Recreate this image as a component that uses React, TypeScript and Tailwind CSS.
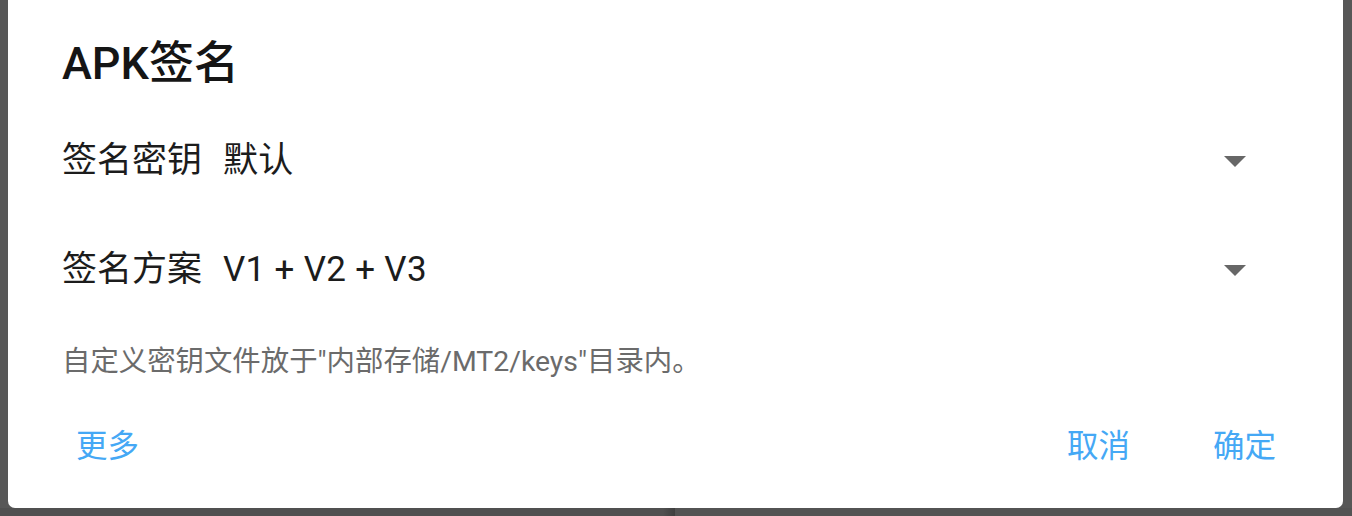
import React from 'react';

const cjk = "font-['Roboto','Noto_Sans_CJK_SC',sans-serif]";

const Caret: React.FC = () => (
  <svg width="22" height="11" viewBox="0 0 22 11" className="shrink-0">
    <path d="M0 0 H22 L11 11 Z" fill="#676767" />
  </svg>
);

const SelectRow: React.FC<{ label: string; value: string }> = ({ label, value }) => (
  <div className="h-[109px] flex items-center pl-[54px] pr-[97px]">
    <span className="text-[35px] text-[#1c1c1c]">{label}</span>
    <span className="ml-[21px] text-[35px] text-[#1c1c1c] tracking-[0.3px]">{value}</span>
    <div className="flex-1" />
    <Caret />
  </div>
);

const App: React.FC = () => {
  return (
    <div className={`w-[1352px] h-[516px] bg-[#575757] flex flex-col ${cjk}`}>
      <div className="flex-1 flex pl-[8px] pr-[9px]">
        {/* Dialog */}
        <div className="flex-1 bg-white rounded-b-[7px] flex flex-col">
          <h1 className="mt-[38px] h-[52px] leading-[52px] pl-[54px] text-[45px] font-medium text-[#151515]">
            APK签名
          </h1>
          <div className="mt-[17px]">
            <SelectRow label="签名密钥" value="默认" />
            <SelectRow label="签名方案" value="V1 + V2 + V3" />
          </div>
          <p className="mt-[17px] h-[40px] leading-[40px] pl-[54px] text-[28.4px] text-[#6b6b6b]">
            自定义密钥文件放于"内部存储/MT2/keys"目录内。
          </p>
          <div className="mt-[45px] h-[40px] flex items-center text-[31.5px] text-[#45a8f5]">
            <span className="ml-[68px]">更多</span>
            <div className="flex-1" />
            <span>取消</span>
            <span className="ml-[83px] mr-[67px]">确定</span>
          </div>
        </div>
      </div>
      {/* Bottom strip of the screen below */}
      <div className="h-[8px] flex">
        <div className="w-[663px] bg-[#505050]" />
        <div className="w-[12px] bg-gradient-to-r from-[#505050] to-[#3f3f3f]" />
        <div className="flex-1 bg-[#535353]" />
      </div>
    </div>
  );
};

export default App;
